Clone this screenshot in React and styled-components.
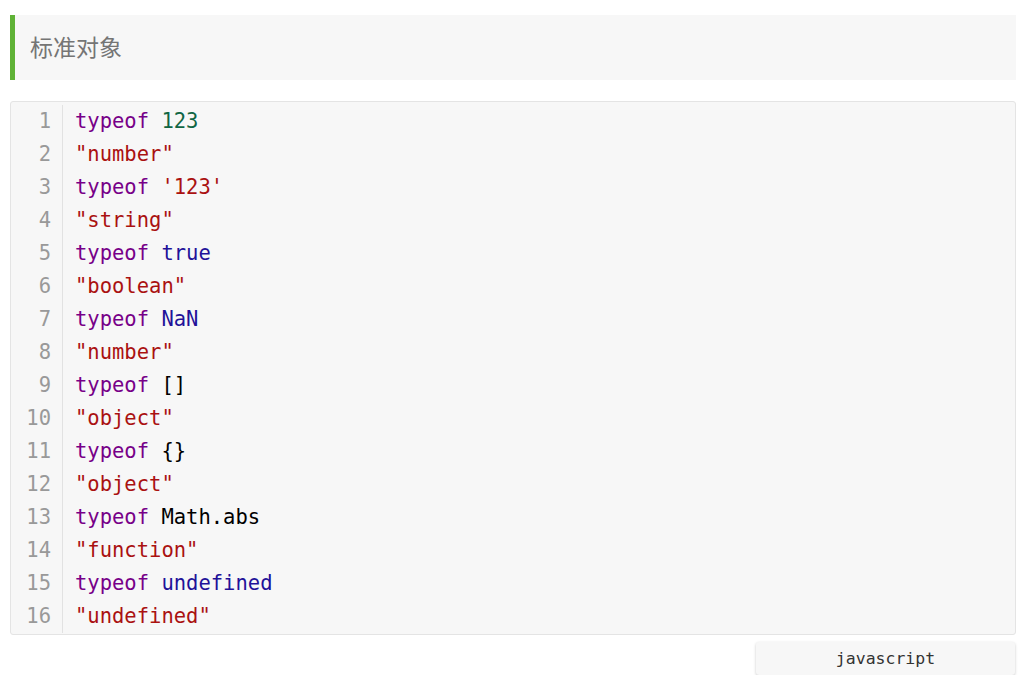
import React from 'react'
import styled, { createGlobalStyle } from 'styled-components'

const GlobalStyle = createGlobalStyle`
  html, body {
    margin: 0;
    padding: 0;
    background: #fff;
    font-family: "Noto Sans", "Noto Sans CJK SC", sans-serif;
  }
`

const Page = styled.div`
  padding: 15px 16px 0 10px;
  display: flex;
  flex-direction: column;
`

const Heading = styled.h3`
  margin: 0;
  height: 65px;
  display: flex;
  align-items: center;
  padding-left: 15px;
  padding-bottom: 3px;
  box-sizing: border-box;
  background: #f7f7f7;
  border-left: 5px solid #5fb236;
  font-family: "Noto Sans CJK SC", sans-serif;
  font-weight: 400;
  font-size: 23px;
  color: #757575;
`

const CodeBox = styled.div`
  margin-top: 21px;
  display: flex;
  background: #f7f7f7;
  border: 1px solid #e4e4e4;
  border-radius: 3px;
  padding: 3px 0 1px;
  font-family: "DejaVu Sans Mono", "Liberation Mono", monospace;
  font-size: 20.5px;
  line-height: 33px;
`

const Gutter = styled.div`
  width: 40px;
  padding-right: 11px;
  border-right: 1px solid #e2e2e2;
  text-align: right;
  color: #999;
`

const Lines = styled.div`
  padding-left: 12px;
  white-space: pre;
  color: #000;
`

const Tok = styled.span`
  color: ${p => ({ kw: '#770088', num: '#116644', str: '#aa1111', atom: '#221199' }[p.$t] || '#000')};
`

const Footer = styled.div`
  display: flex;
  justify-content: flex-end;
  margin-top: 7px;
`

const LangTag = styled.div`
  width: 259px;
  height: 33px;
  margin-right: 1px;
  display: flex;
  align-items: center;
  justify-content: center;
  background: #f7f7f7;
  border-radius: 3px;
  box-shadow: 0 1px 3px rgba(0, 0, 0, 0.22);
  font-family: "DejaVu Sans Mono", monospace;
  font-size: 16.5px;
  color: #333;
`

const code = [
  [['kw', 'typeof'], ['', ' '], ['num', '123']],
  [['str', '"number"']],
  [['kw', 'typeof'], ['', ' '], ['str', "'123'"]],
  [['str', '"string"']],
  [['kw', 'typeof'], ['', ' '], ['atom', 'true']],
  [['str', '"boolean"']],
  [['kw', 'typeof'], ['', ' '], ['atom', 'NaN']],
  [['str', '"number"']],
  [['kw', 'typeof'], ['', ' '], ['', '[]']],
  [['str', '"object"']],
  [['kw', 'typeof'], ['', ' '], ['', '{}']],
  [['str', '"object"']],
  [['kw', 'typeof'], ['', ' '], ['', 'Math.abs']],
  [['str', '"function"']],
  [['kw', 'typeof'], ['', ' '], ['atom', 'undefined']],
  [['str', '"undefined"']],
]

const App = () => {
  return (
    <>
      <GlobalStyle />
      <Page>
        <Heading>标准对象</Heading>
        <CodeBox>
          <Gutter>
            {code.map((_, i) => <div key={i}>{i + 1}</div>)}
          </Gutter>
          <Lines>
            {code.map((line, i) => (
              <div key={i}>
                {line.map(([t, s], j) => <Tok key={j} $t={t}>{s}</Tok>)}
              </div>
            ))}
          </Lines>
        </CodeBox>
        <Footer>
          <LangTag>javascript</LangTag>
        </Footer>
      </Page>
    </>
  )
}

export default App
